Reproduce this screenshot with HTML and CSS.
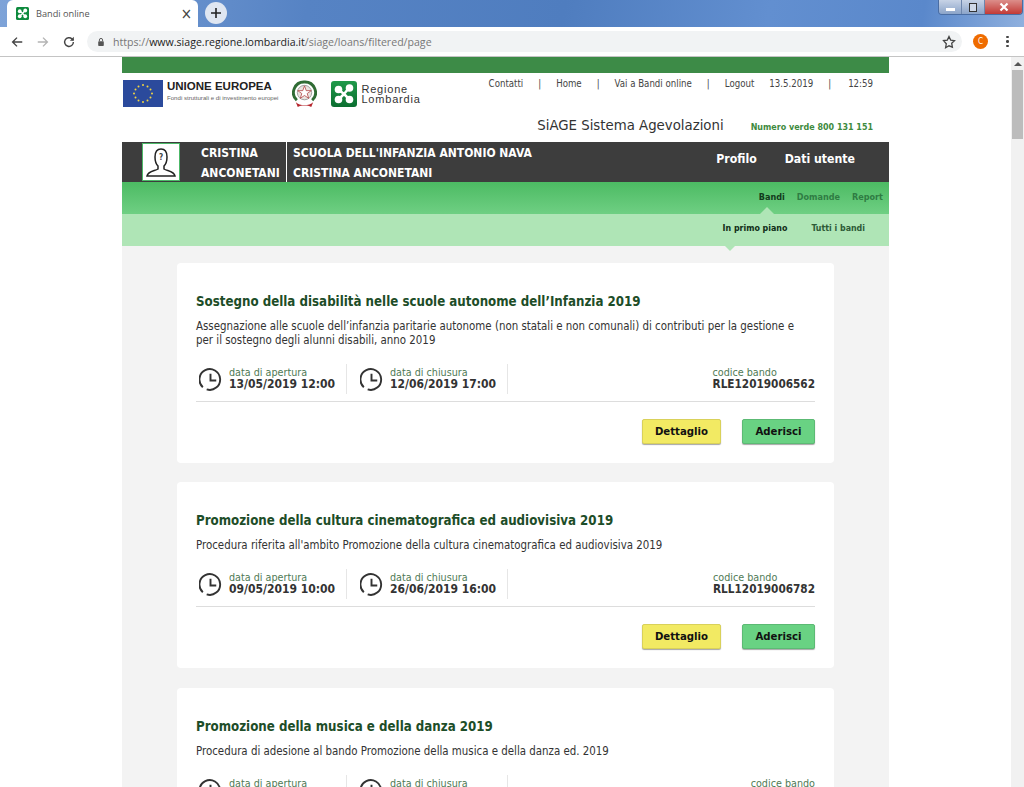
FILE: index.html
```html
<!DOCTYPE html>
<html lang="it">

<head>
    <meta charset="UTF-8">
    <title>Bandi online</title>
    <link rel="stylesheet" href="styles.css">
</head>

<body>
    <div class="tabbar">
        <div class="tab">
            <svg class="favicon" viewBox="0 0 26 26"><rect width="26" height="26" rx="3" fill="#0d8a3d"/><path d="M13 13 8 9M13 13l5-6M13 13l-5 5M13 13l5 5" stroke="#fff" stroke-width="2.500"/><circle cx="7.500" cy="8.500" r="3.800" fill="#fff"/><circle cx="18.500" cy="7" r="3.800" fill="#fff"/><circle cx="7.500" cy="18.500" r="3.800" fill="#fff"/><circle cx="18.500" cy="18.500" r="3.800" fill="#fff"/></svg>
            <span class="tab-title">Bandi online</span>
            <span class="tab-close">&#215;</span>
        </div>
        <div class="new-tab">
            <svg viewBox="0 0 12 12" width="12" height="12"><path d="M6 1v10M1 6h10" stroke="#222" stroke-width="1.6"/></svg>
        </div>
        <div class="window-buttons">
            <div class="win-btn"><span class="win-min"></span></div>
            <div class="win-btn"><span class="win-max"></span></div>
            <div class="win-btn win-close">
                <svg viewBox="0 0 10 10" width="10" height="10"><path d="M1.500 1.500l7 7M8.500 1.500l-7 7" stroke="#fff" stroke-width="2.2"/></svg>
            </div>
        </div>
    </div>

    <div class="toolbar">
        <svg class="tool-icon" viewBox="0 0 16 16"><path d="M14 8H3M8 3 3 8l5 5" fill="none" stroke="#444" stroke-width="1.6"/></svg>
        <svg class="tool-icon" viewBox="0 0 16 16"><path d="M2 8h11M8 3l5 5-5 5" fill="none" stroke="#b4b4b4" stroke-width="1.6"/></svg>
        <svg class="tool-icon" viewBox="0 0 16 16"><path d="M13 8a5 5 0 1 1-1.500-3.500L13 6" fill="none" stroke="#444" stroke-width="1.6"/><path d="M13.500 2v4.500H9z" fill="#444"/></svg>
        <div class="omnibox">
            <svg class="lock" viewBox="0 0 10 12"><path d="M3 5V3.500a2 2 0 0 1 4 0V5" fill="none" stroke="#555" stroke-width="1.200"/><rect x="1.500" y="5" width="7" height="6" rx="1" fill="#555"/></svg>
            <span class="url"><span class="url-dim">https://</span>www.siage.regione.lombardia.it<span class="url-dim">/siage/loans/filtered/page</span></span>
            <svg class="star" viewBox="0 0 14 14"><path d="M7 1.500l1.700 3.600 3.800.5-2.800 2.700.7 3.900L7 10.800l-3.400 1.900.7-3.900L1.500 5.600l3.800-.5z" fill="none" stroke="#444" stroke-width="1.300"/></svg>
        </div>
        <div class="avatar">C</div>
        <div class="kebab"><i></i><i></i><i></i></div>
    </div>

    <div class="viewport">
        <div class="page">
            <div class="top-strip"></div>

            <div class="header">
                <div class="logos">
                    <svg class="eu-flag" viewBox="0 0 40 27">
                        <rect width="40" height="27" fill="#2b4a9c"/>
                        <g fill="#f2d640">
                            <circle cx="20" cy="5" r="1"/><circle cx="24.500" cy="6.500" r="1"/><circle cx="27.500" cy="9.500" r="1"/><circle cx="29" cy="13.500" r="1"/><circle cx="27.500" cy="17.500" r="1"/><circle cx="24.500" cy="20.500" r="1"/>
                            <circle cx="20" cy="22" r="1"/><circle cx="15.500" cy="20.500" r="1"/><circle cx="12.500" cy="17.500" r="1"/><circle cx="11" cy="13.500" r="1"/><circle cx="12.500" cy="9.500" r="1"/><circle cx="15.500" cy="6.500" r="1"/>
                        </g>
                    </svg>
                    <div class="eu-text">
                        <div class="eu-name">UNIONE EUROPEA</div>
                        <div class="eu-sub">Fondi strutturali e di investimento europei</div>
                    </div>
                    <svg class="emblem" viewBox="0 0 26 30">
                        <path d="M13 2a11 11 0 0 0-8 19M13 2a11 11 0 0 1 8 19" fill="none" stroke="#2f6b34" stroke-width="3"/>
                        <circle cx="13" cy="13" r="7.500" fill="#e9e3df" stroke="#8a8a8a" stroke-width=".8"/>
                        <path d="M13 6l1.800 5h5.200l-4.200 3 1.600 5L13 16l-4.400 3 1.600-5L6 11h5.200z" fill="#fff" stroke="#b04040" stroke-width=".8"/>
                        <path d="M4 23c4 4 14 4 18 0l-2 5c-4-2-10-2-14 0z" fill="#b5252c"/>
                    </svg>
                    <svg class="lombardia-mark" viewBox="0 0 26 26">
                        <defs><linearGradient id="markfill" x1="0" y1="0" x2="0" y2="1"><stop offset="0" stop-color="#1f9a4a"/><stop offset="1" stop-color="#0b6e30"/></linearGradient></defs>
                        <rect width="26" height="26" rx="3" fill="url(#markfill)"/>
                        <path d="M13 13 8 9M13 13l5-6M13 13l-5 5M13 13l5 5" stroke="#fff" stroke-width="2.500"/>
                        <circle cx="7.500" cy="8.500" r="3.800" fill="#fff"/><circle cx="18.500" cy="7" r="3.800" fill="#fff"/><circle cx="7.500" cy="18.500" r="3.800" fill="#fff"/><circle cx="18.500" cy="18.500" r="3.800" fill="#fff"/>
                    </svg>
                    <div class="lombardia-name">Regione<br>Lombardia</div>
                </div>
                <div class="header-right">
                    <div class="top-links">
                        <span>Contatti</span><span class="sep">|</span><span>Home</span><span class="sep">|</span><span>Vai a Bandi online</span><span class="sep">|</span><span>Logout</span><span class="today">13.5.2019</span><span class="sep sep-time">|</span><span>12:59</span>
                    </div>
                    <div class="site-line">
                        <span class="site-name">SiAGE Sistema Agevolazioni</span>
                        <span class="green-number">Numero verde 800 131 151</span>
                    </div>
                </div>
            </div>

            <div class="user-bar">
                <div class="user-photo">
                    <svg viewBox="0 0 32 32" width="32" height="32"><path d="M2 30c1-5 8-5 11-7v-3c-2-2-3-5-3-9 0-5 2-8 6-8s6 3 6 8c0 4-1 7-3 9v3c3 2 10 2 11 7z" fill="none" stroke="#222" stroke-width="1.500"/><text x="16" y="14" font-size="8" text-anchor="middle" fill="#444">?</text></svg>
                </div>
                <div class="user-name">CRISTINA<br>ANCONETANI</div>
                <div class="user-org">SCUOLA DELL'INFANZIA ANTONIO NAVA<br>CRISTINA ANCONETANI</div>
                <div class="user-menu"><span>Profilo</span><span>Dati utente</span></div>
            </div>

            <div class="main-nav">
                <span class="nav-active">Bandi</span><span>Domande</span><span>Report</span>
            </div>
            <div class="sub-nav">
                <span class="sub-active">In primo piano</span><span>Tutti i bandi</span>
            </div>

            <div class="content">
                <div class="card">
                    <h2 class="card-title">Sostegno della disabilità nelle scuole autonome dell’Infanzia 2019</h2>
                    <p class="card-text">Assegnazione alle scuole dell’infanzia paritarie autonome (non statali e non comunali) di contributi per la gestione e per il sostegno degli alunni disabili, anno 2019</p>
                    <div class="card-info">
                        <div class="date-box">
                            <svg class="clock" viewBox="0 0 24 24"><path d="M4 20A10.800 10.800 0 1 1 8 22.300" fill="none" stroke="#333" stroke-width="2"/><path d="M12 6v7h6" fill="none" stroke="#333" stroke-width="2"/></svg>
                            <div><div class="info-label">data di apertura</div><div class="info-value">13/05/2019 12:00</div></div>
                        </div>
                        <div class="date-box">
                            <svg class="clock" viewBox="0 0 24 24"><path d="M4 20A10.800 10.800 0 1 1 8 22.300" fill="none" stroke="#333" stroke-width="2"/><path d="M12 6v7h6" fill="none" stroke="#333" stroke-width="2"/></svg>
                            <div><div class="info-label">data di chiusura</div><div class="info-value">12/06/2019 17:00</div></div>
                        </div>
                        <div class="code-box"><div class="info-label">codice bando</div><div class="info-value code-value">RLE12019006562</div></div>
                    </div>
                    <div class="card-actions"><a class="btn btn-detail">Dettaglio</a><a class="btn btn-join">Aderisci</a></div>
                </div>

                <div class="card">
                    <h2 class="card-title">Promozione della cultura cinematografica ed audiovisiva 2019</h2>
                    <p class="card-text">Procedura riferita all'ambito Promozione della cultura cinematografica ed audiovisiva 2019</p>
                    <div class="card-info">
                        <div class="date-box">
                            <svg class="clock" viewBox="0 0 24 24"><path d="M4 20A10.800 10.800 0 1 1 8 22.300" fill="none" stroke="#333" stroke-width="2"/><path d="M12 6v7h6" fill="none" stroke="#333" stroke-width="2"/></svg>
                            <div><div class="info-label">data di apertura</div><div class="info-value">09/05/2019 10:00</div></div>
                        </div>
                        <div class="date-box">
                            <svg class="clock" viewBox="0 0 24 24"><path d="M4 20A10.800 10.800 0 1 1 8 22.300" fill="none" stroke="#333" stroke-width="2"/><path d="M12 6v7h6" fill="none" stroke="#333" stroke-width="2"/></svg>
                            <div><div class="info-label">data di chiusura</div><div class="info-value">26/06/2019 16:00</div></div>
                        </div>
                        <div class="code-box"><div class="info-label">codice bando</div><div class="info-value code-value">RLL12019006782</div></div>
                    </div>
                    <div class="card-actions"><a class="btn btn-detail">Dettaglio</a><a class="btn btn-join">Aderisci</a></div>
                </div>

                <div class="card card-last">
                    <h2 class="card-title">Promozione della musica e della danza 2019</h2>
                    <p class="card-text">Procedura di adesione al bando Promozione della musica e della danza ed. 2019</p>
                    <div class="card-info">
                        <div class="date-box">
                            <svg class="clock" viewBox="0 0 24 24"><path d="M4 20A10.800 10.800 0 1 1 8 22.300" fill="none" stroke="#333" stroke-width="2"/><path d="M12 6v7h6" fill="none" stroke="#333" stroke-width="2"/></svg>
                            <div><div class="info-label">data di apertura</div><div class="info-value">&nbsp;</div></div>
                        </div>
                        <div class="date-box">
                            <svg class="clock" viewBox="0 0 24 24"><path d="M4 20A10.800 10.800 0 1 1 8 22.300" fill="none" stroke="#333" stroke-width="2"/><path d="M12 6v7h6" fill="none" stroke="#333" stroke-width="2"/></svg>
                            <div><div class="info-label">data di chiusura</div><div class="info-value">&nbsp;</div></div>
                        </div>
                        <div class="code-box"><div class="info-label">codice bando</div><div class="info-value code-value">&nbsp;</div></div>
                    </div>
                </div>
            </div>
        </div>

        <div class="scrollbar">
            <div class="scroll-arrow"></div>
            <div class="scroll-thumb"></div>
        </div>
    </div>
</body>

</html>
```
FILE: styles.css
```css
html, body {
    margin: 0;
    padding: 0;
    height: 787px;
    overflow: hidden;
}

body {
    font-family: "DejaVu Sans Condensed", "DejaVu Sans", Verdana, sans-serif;
    font-stretch: condensed;
    background-color: #fff;
    color: #333;
    display: flex;
    flex-direction: column;
}

/* browser window */
.tabbar {
    height: 27px;
    display: flex;
    align-items: flex-start;
    padding-left: 7px;
    background: linear-gradient(100deg, #7ea3d8 0, #5683c4 30%, #4f7dbf 55%, #628fd0 75%, #5a88cb 90%, #8fb0de 100%);
    flex-shrink: 0;
}

.tab {
    width: 191px;
    height: 27px;
    background-color: #fff;
    border-radius: 6px 6px 0 0;
    display: flex;
    align-items: center;
    padding-left: 9px;
    box-sizing: border-box;
}

.favicon {
    width: 13px;
    height: 13px;
}

.tab-title {
    font-family: "Open Sans", sans-serif;
    font-stretch: normal;
    font-size: 9.200px;
    color: #555;
    margin-left: 7px;
    flex: 1;
}

.tab-close {
    font-size: 15px;
    color: #444;
    margin-right: 6px;
}

.new-tab {
    width: 22px;
    height: 22px;
    border-radius: 50%;
    background-color: #dfe6f1;
    margin: 2px 0 0 7px;
    display: flex;
    align-items: center;
    justify-content: center;
}

.window-buttons {
    display: flex;
    margin-left: auto;
    margin-right: 1px;
    height: 14px;
    width: 83px;
    border: 1px solid #4a6da3;
    border-top: none;
    border-radius: 0 0 4px 4px;
    overflow: hidden;
}

.win-btn {
    width: 22px;
    display: flex;
    align-items: center;
    justify-content: center;
    background: linear-gradient(#c7d3e6, #8ba4c9);
    border-right: 1px solid #6d86ad;
}

.win-close {
    flex: 1;
    background: linear-gradient(#dc8e8a, #c23a36);
    border-right: none;
}

.win-min {
    width: 9px;
    height: 3px;
    background-color: #fff;
    margin-top: 5px;
}

.win-max {
    width: 6px;
    height: 7px;
    border: 1.500px solid #333;
    background-color: #cfd9e8;
}

.toolbar {
    height: 29px;
    display: flex;
    align-items: center;
    padding-left: 10px;
    background-color: #fff;
    border-bottom: 1px solid #c4c4c4;
    flex-shrink: 0;
}

.tool-icon {
    width: 14px;
    height: 14px;
    margin-right: 12px;
}

.tool-icon:nth-of-type(3) {
    margin-right: 11px;
}

.omnibox {
    height: 21px;
    width: 875px;
    border-radius: 11px;
    background-color: #f1f3f4;
    display: flex;
    align-items: center;
    padding: 0 6px 0 10px;
    box-sizing: border-box;
}

.lock {
    width: 8px;
    height: 10px;
    margin-right: 8px;
}

.url {
    font-family: "Open Sans", sans-serif;
    font-stretch: normal;
    font-size: 10.600px;
    color: #222;
    flex: 1;
}

.url-dim {
    color: #777;
}

.star {
    width: 14px;
    height: 14px;
}

.avatar {
    width: 15px;
    height: 15px;
    margin-left: 11px;
    border-radius: 50%;
    background-color: #ef6c00;
    color: #fff;
    font-size: 8px;
    line-height: 15px;
    text-align: center;
}

.kebab {
    margin-left: 18px;
    display: flex;
    flex-direction: column;
    gap: 2px;
}

.kebab i {
    display: block;
    width: 2.500px;
    height: 2.500px;
    border-radius: 50%;
    background-color: #444;
}

/* page */
.viewport {
    flex: 1;
    display: flex;
    overflow: hidden;
    background-color: #fff;
}

.page {
    width: 767px;
    margin-left: 122px;
}

.top-strip {
    height: 16px;
    background-color: #3d8b47;
}

.header {
    height: 69px;
    display: flex;
    justify-content: space-between;
}

.logos {
    display: flex;
    align-items: flex-start;
    padding: 7px 0 0 1px;
}

.eu-flag {
    width: 40px;
    height: 27px;
}

.eu-text {
    margin-left: 4px;
}

.eu-name {
    font-family: "Liberation Sans", Arial, sans-serif;
    font-stretch: normal;
    font-size: 11.500px;
    line-height: 13px;
    font-weight: bold;
    color: #222;
}

.eu-sub {
    font-family: "Liberation Sans", Arial, sans-serif;
    font-stretch: normal;
    font-size: 6.100px;
    line-height: 9px;
    color: #666;
}

.emblem {
    width: 25px;
    height: 29px;
    margin-left: 14px;
}

.lombardia-mark {
    width: 26px;
    height: 26px;
    margin: 1px 0 0 14px;
}

.lombardia-name {
    font-family: "Liberation Sans", Arial, sans-serif;
    font-stretch: normal;
    font-size: 11px;
    line-height: 10px;
    letter-spacing: 0.8px;
    color: #333;
    margin: 4px 0 0 4px;
}

.header-right {
    display: flex;
    flex-direction: column;
    align-items: flex-end;
    padding-right: 16px;
}

.top-links {
    font-size: 9.600px;
    line-height: 12px;
    color: #444;
    margin-top: 5px;
    white-space: nowrap;
}

.top-links .sep {
    margin: 0 15px;
}

.top-links .sep-time {
    margin: 0 17px 0 15px;
}

.top-links .today {
    margin-left: 15px;
}

.site-line {
    display: flex;
    align-items: baseline;
    margin-top: 26px;
}

.site-name {
    font-size: 14.800px;
    color: #333;
}

.green-number {
    font-size: 8.900px;
    font-weight: bold;
    color: #3e8a3e;
    margin-left: 27px;
}

.user-bar {
    height: 40px;
    display: flex;
    background-color: #3d3d3d;
    color: #fff;
    font-size: 12px;
    font-weight: bold;
    line-height: 20px;
}

.user-photo {
    width: 38px;
    height: 38px;
    margin: 1px 0 0 20px;
    background-color: #fff;
    border: 1px solid #4cb868;
    box-sizing: border-box;
    display: flex;
    align-items: center;
    justify-content: center;
}

.user-name {
    width: 85px;
    margin-left: 21px;
    padding-top: 1px;
    white-space: nowrap;
    border-right: 1px solid #fff;
}

.user-org {
    margin-left: 6px;
    padding-top: 1px;
    white-space: nowrap;
}

.user-menu {
    margin-left: auto;
    display: flex;
    align-items: center;
    gap: 28px;
    padding: 0 34px 7px 0;
    font-size: 12.200px;
}

.main-nav {
    height: 32px;
    display: flex;
    justify-content: flex-end;
    align-items: center;
    gap: 12px;
    padding: 0 6px 2px 0;
    box-sizing: border-box;
    background: linear-gradient(#4cbb63, #6fcf83);
    font-size: 9px;
    font-weight: bold;
    color: #2f7c43;
}

.nav-active {
    color: #123a1b;
    position: relative;
}

.nav-active::after {
    content: "";
    position: absolute;
    left: 1px;
    bottom: -12px;
    border: 7px solid transparent;
    border-top: none;
    border-bottom-color: #afe5b6;
}

.sub-nav {
    height: 32px;
    display: flex;
    justify-content: flex-end;
    align-items: center;
    gap: 24px;
    padding: 0 24px 4px 0;
    box-sizing: border-box;
    background-color: #afe5b6;
    font-size: 8.800px;
    font-weight: bold;
    color: #2d5a36;
}

.sub-active {
    color: #102e17;
    position: relative;
}

.sub-active::after {
    content: "";
    position: absolute;
    left: 0;
    bottom: -18px;
    border: 7px solid transparent;
    border-bottom: none;
    border-top-color: #afe5b6;
}

.content {
    background-color: #f3f3f3;
    padding: 17px 55px 0;
    display: flex;
    flex-direction: column;
    gap: 19px;
    height: 600px;
}

.card {
    background-color: #fff;
    border-radius: 4px;
    padding: 30px 19px 19px;
}

.card-last {
    margin-top: 1px;
}

.card-title {
    margin: 0;
    font-size: 13.200px;
    line-height: 17px;
    font-weight: bold;
    color: #1d4d28;
}

.card-text {
    margin: 9px 0 0;
    padding-right: 10px;
    font-size: 11.400px;
    line-height: 14px;
    color: #333;
}

.card-info {
    display: flex;
    margin-top: 17px;
    padding-bottom: 7px;
    border-bottom: 1px solid #ddd;
}

.date-box {
    width: 151px;
    height: 30px;
    margin-right: 10px;
    box-sizing: border-box;
    display: flex;
    align-items: center;
    border-right: 1px solid #e6e6e6;
    padding-left: 3px;
    gap: 7px;
}

.clock {
    width: 23px;
    height: 23px;
    flex-shrink: 0;
}

.info-label {
    font-size: 10.700px;
    line-height: 10px;
    color: #4f7a55;
}

.info-value {
    font-size: 12px;
    line-height: 13px;
    font-weight: bold;
    color: #333;
}

.code-box {
    margin-left: auto;
    padding-top: 4px;
}

.code-value {
    font-size: 11.700px;
}

.card-actions {
    display: flex;
    justify-content: flex-end;
    gap: 21px;
    margin-top: 17px;
}

.btn {
    height: 25px;
    box-sizing: border-box;
    line-height: 23px;
    text-align: center;
    font-size: 11.300px;
    font-weight: bold;
    color: #111;
    border-radius: 2px;
    box-shadow: 0 1px 1px rgba(0, 0, 0, 0.35);
}

.btn-detail {
    width: 79px;
    background-color: #f2ea63;
    border: 1px solid #d9d15a;
}

.btn-join {
    width: 73px;
    background-color: #69d283;
    border: 1px solid #5cba74;
}

.scrollbar {
    width: 13px;
    margin-left: auto;
    background-color: #f1f1f1;
    display: flex;
    flex-direction: column;
    align-items: center;
}

.scroll-arrow {
    margin-top: 5px;
    border: 4px solid transparent;
    border-top: none;
    border-bottom: 4px solid #555;
}

.scroll-thumb {
    width: 11px;
    height: 69px;
    margin-top: 4px;
    background-color: #bcbcbc;
}
```
